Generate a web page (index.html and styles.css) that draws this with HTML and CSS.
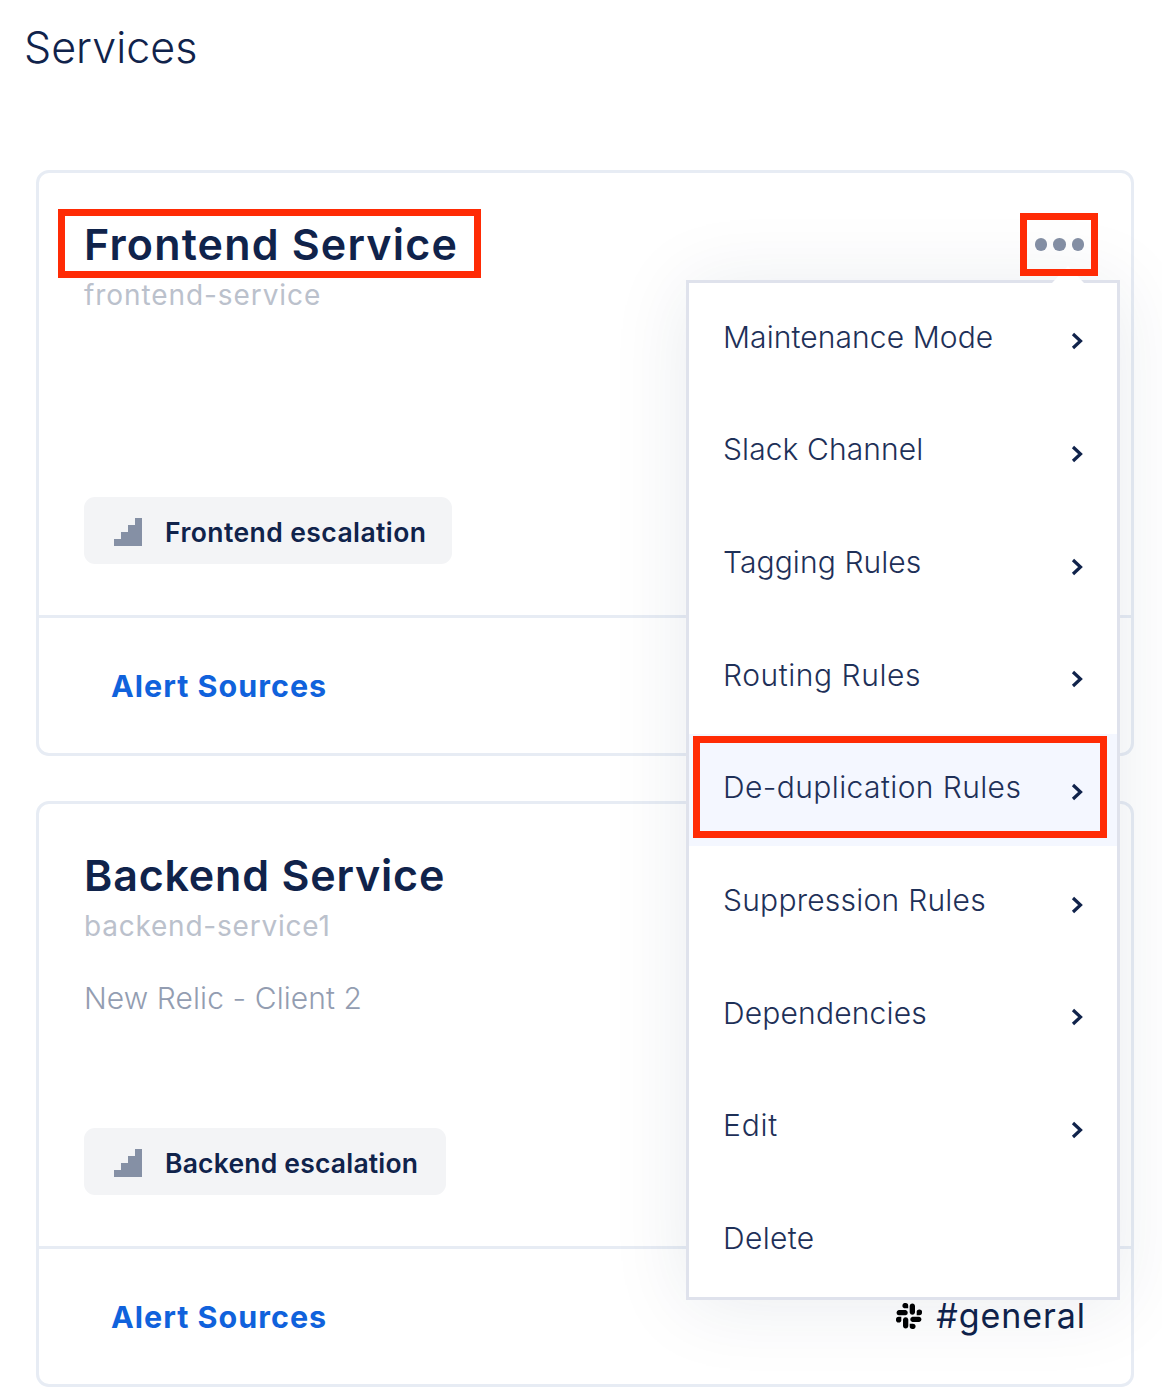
FILE: index.html
```html
<!DOCTYPE html>
<html lang="en">
<head>
<meta charset="utf-8">
<title>Services</title>
<link rel="stylesheet" href="styles.css">
</head>
<body>
<svg class="defs" aria-hidden="true">
  <symbol id="stairs" viewBox="0 0 28 28"><path d="M0 28V21H7V14H14V7H21V0H28V28Z"/></symbol>
  <symbol id="chevron" viewBox="0 0 12 18"><path d="M2 2L9.5 9L2 16"/></symbol>
  <symbol id="slack" viewBox="0 0 26 26"><path d="M9.6 0a2.7 2.7 0 1 0 0 5.3h2.6V2.7A2.7 2.7 0 0 0 9.6 0ZM9.6 7H2.7a2.7 2.7 0 0 0 0 5.3h6.9a2.7 2.7 0 0 0 0-5.3ZM26 9.6a2.7 2.7 0 1 0-5.3 0v2.7h2.6A2.7 2.7 0 0 0 26 9.6ZM19 9.6V2.7a2.7 2.7 0 0 0-5.3 0v6.9a2.7 2.7 0 0 0 5.3 0ZM16.4 26a2.7 2.7 0 1 0 0-5.3h-2.7v2.6A2.7 2.7 0 0 0 16.4 26ZM16.4 19h6.9a2.7 2.7 0 0 0 0-5.3h-6.9a2.7 2.7 0 0 0 0 5.3ZM0 16.4a2.7 2.7 0 1 0 5.3 0v-2.7H2.7A2.7 2.7 0 0 0 0 16.4ZM7 16.4v6.9a2.7 2.7 0 0 0 5.3 0v-6.9a2.7 2.7 0 0 0-5.3 0Z"/></symbol>
</svg>
<main class="page">
  <h1 class="page-title">Services</h1>
  <section class="card">
    <div class="card-body">
      <header class="card-head">
        <h2 class="name">Frontend Service</h2>
        <div class="dots"><i></i><i></i><i></i></div>
      </header>
      <p class="slug">frontend-service</p>
      <div class="badge"><svg class="stairs"><use href="#stairs"/></svg><span class="badge-text">Frontend escalation</span></div>
    </div>
    <footer class="card-foot"><a class="sources">Alert Sources</a></footer>
    <div class="mark mark-name"></div>
    <nav class="menu">
      <div class="item"><span class="m1">Maintenance Mode</span><svg class="chevron"><use href="#chevron"/></svg></div>
      <div class="item"><span class="m2">Slack Channel</span><svg class="chevron"><use href="#chevron"/></svg></div>
      <div class="item"><span class="m3">Tagging Rules</span><svg class="chevron"><use href="#chevron"/></svg></div>
      <div class="item"><span class="m4">Routing Rules</span><svg class="chevron"><use href="#chevron"/></svg></div>
      <div class="item active"><span class="m5">De-duplication Rules</span><svg class="chevron"><use href="#chevron"/></svg><div class="mark mark-item"></div></div>
      <div class="item"><span class="m6">Suppression Rules</span><svg class="chevron"><use href="#chevron"/></svg></div>
      <div class="item"><span class="m7">Dependencies</span><svg class="chevron"><use href="#chevron"/></svg></div>
      <div class="item"><span class="m8">Edit</span><svg class="chevron"><use href="#chevron"/></svg></div>
      <div class="item"><span class="m9">Delete</span></div>
    </nav>
    <div class="mark mark-dots"></div>
  </section>
  <section class="card">
    <div class="card-body">
      <header class="card-head"><h2 class="name name-back">Backend Service</h2></header>
      <p class="slug slug-back">backend-service1</p>
      <p class="desc">New Relic - Client 2</p>
      <div class="badge badge-back"><svg class="stairs"><use href="#stairs"/></svg><span class="badge-text">Backend escalation</span></div>
    </div>
    <footer class="card-foot"><a class="sources">Alert Sources</a><span class="channel"><svg class="slack"><use href="#slack"/></svg><span>#general</span></span></footer>
  </section>
</main>
</body>
</html>
```
FILE: styles.css
```css
* { box-sizing: border-box; }
body { margin: 0; background: #fff; color: #10234b; font-family: Inter, "Liberation Sans", sans-serif; height: 1400px; overflow: hidden; }
h1, h2, p { margin: 0; white-space: nowrap; }
.defs { position: absolute; width: 0; height: 0; }
.page { padding: 20px 28px 0 36px; display: flex; flex-direction: column; }
.page-title { font-size: 43px; line-height: 54px; font-weight: 300; margin: 0 0 96px -12px; }
.card { position: relative; border: 3px solid #e7ecf4; border-radius: 13px; height: 586px; margin-bottom: 45px; display: flex; flex-direction: column; }
.card-body { height: 442px; padding: 45px 47px 0 45px; display: flex; flex-direction: column; align-items: flex-start; }
.card-head { width: 100%; display: flex; justify-content: space-between; }
.name { font-size: 43px; line-height: 52px; font-weight: 600; letter-spacing: 1.18px; }
.name-back { letter-spacing: .8px; }
.dots { display: flex; gap: 6px; padding-top: 20px; }
.dots i { width: 12.5px; height: 12.5px; border-radius: 50%; background: #8590a5; }
.slug { font-size: 28px; line-height: 36px; margin-top: 7px; color: #bbc1cc; letter-spacing: .92px; }
.slug-back { letter-spacing: .78px; }
.desc { font-size: 30px; line-height: 38px; margin-top: 35px; color: #939db1; font-weight: 300; letter-spacing: .08px; }
.badge { margin-top: auto; margin-bottom: 51px; height: 67px; border-radius: 11px; background: #f3f4f6; display: flex; align-items: center; padding: 3px 26px 0 30px; gap: 23px; font-size: 26.5px; font-weight: 600; letter-spacing: .42px; white-space: nowrap; }
.badge-back { padding-right: 28px; letter-spacing: .2px; }
.stairs { width: 28px; height: 28px; fill: #8590a5; }
.card-foot { flex: 1; border-top: 3px solid #e7ecf4; padding: 0 45px 0 72px; display: flex; align-items: center; justify-content: space-between; }
.sources { color: #1062dc; font-size: 30.5px; font-weight: 700; letter-spacing: 1px; white-space: nowrap; }
.channel { display: flex; align-items: center; gap: 14px; font-size: 34px; padding-bottom: 2px; letter-spacing: .95px; }
.slack { width: 26px; height: 26px; fill: #000; }
.menu { position: absolute; z-index: 2; left: 647px; top: 107px; width: 434px; height: 1020px; border: 3px solid #dfe2ec; background: #fff; box-shadow: 0 5px 75px rgba(20, 40, 80, .09); }
.menu::before { content: ""; position: absolute; left: 363px; top: -17px; border: 16px solid transparent; border-top: 0; border-bottom: 17px solid #fff; }
.item { position: relative; height: 112.67px; padding: 0 34px 5px 34px; display: flex; align-items: center; justify-content: space-between; font-size: 30px; font-weight: 300; color: #1e3058; white-space: nowrap; }
.m1, .m2, .m3 { letter-spacing: .09px; }
.m4 { letter-spacing: .55px; }
.m5 { letter-spacing: .4px; }
.m6 { letter-spacing: .24px; }
.m7 { letter-spacing: .17px; }
.m8 { letter-spacing: .8px; }
.m9 { letter-spacing: .35px; }
.active { background: #f4f7ff; }
.chevron { width: 12px; height: 18px; margin-top: 9px; fill: none; stroke: #10234b; stroke-width: 3.2; }
.mark { position: absolute; z-index: 3; border: 7px solid #ff2b05; }
.mark-name { left: 19px; top: 36px; width: 423px; height: 69px; }
.mark-dots { left: 981px; top: 40px; width: 78px; height: 63px; }
.mark-item { left: 4px; top: 2px; width: 414px; height: 102px; }
```
